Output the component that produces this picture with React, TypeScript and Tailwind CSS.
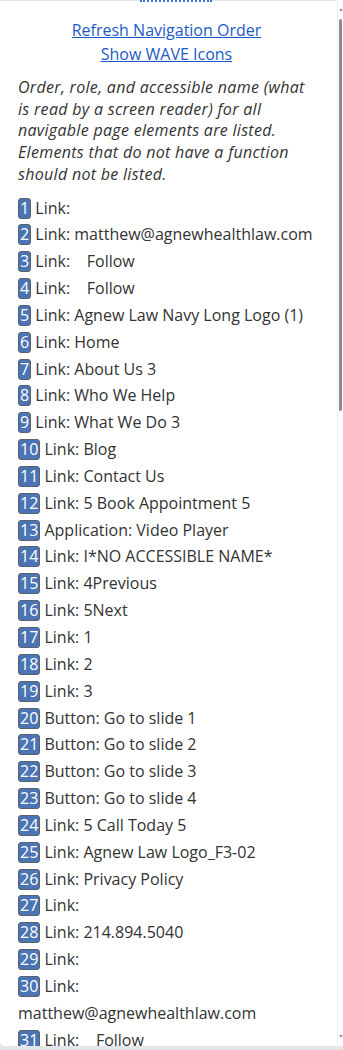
import React from "react";

/* nav order list */
const items: { role: string; name: string }[] = [
  { role: "Link", name: "" },
  { role: "Link", name: "matthew@agnewhealthlaw.com" },
  { role: "Link", name: "   Follow" },
  { role: "Link", name: "   Follow" },
  { role: "Link", name: "Agnew Law Navy Long Logo (1)" },
  { role: "Link", name: "Home" },
  { role: "Link", name: "About Us 3" },
  { role: "Link", name: "Who We Help" },
  { role: "Link", name: "What We Do 3" },
  { role: "Link", name: "Blog" },
  { role: "Link", name: "Contact Us" },
  { role: "Link", name: "5 Book Appointment 5" },
  { role: "Application", name: "Video Player" },
  { role: "Link", name: "I*NO ACCESSIBLE NAME*" },
  { role: "Link", name: "4Previous" },
  { role: "Link", name: "5Next" },
  { role: "Link", name: "1" },
  { role: "Link", name: "2" },
  { role: "Link", name: "3" },
  { role: "Button", name: "Go to slide 1" },
  { role: "Button", name: "Go to slide 2" },
  { role: "Button", name: "Go to slide 3" },
  { role: "Button", name: "Go to slide 4" },
  { role: "Link", name: "5 Call Today 5" },
  { role: "Link", name: "Agnew Law Logo_F3-02" },
  { role: "Link", name: "Privacy Policy" },
  { role: "Link", name: "" },
  { role: "Link", name: "214.894.5040" },
  { role: "Link", name: "" },
  { role: "Link", name: "matthew@agnewhealthlaw.com" },
  { role: "Link", name: "   Follow" },
  { role: "Link", name: "   Follow" },
];

export default function App() {
  return (
    <div
      className="w-[343px] h-[1050px] overflow-hidden bg-[#e4e6ea] flex flex-col"
      style={{ fontFamily: '"Open Sans", "Noto Sans", sans-serif' }}
    >
      <div className="flex flex-1 min-h-0 bg-white rounded-bl-[5px] overflow-hidden">
        {/* panel */}
        <div className="flex-1 min-w-0 flex flex-col border-r border-[#eef0f2]">
          <div className="flex h-[2px] shrink-0">
            <div className="w-[140px] border-t border-[#e3e6ea]" />
            <div className="w-[72px] border-t-2 border-dotted border-[#3c74c8]" />
            <div className="flex-1 border-t border-[#e3e6ea]" />
          </div>

          <div className="pl-[18px] pr-[22px] pt-[16px] text-[#333]">
            <div className="flex flex-col items-center text-[16px] leading-[24px]">
              <a href="#" className="text-[#1a5ac8] underline">
                Refresh Navigation Order
              </a>
              <a href="#" className="text-[#1a5ac8] underline">
                Show WAVE Icons
              </a>
            </div>

            <p className="mt-[11px] italic text-[16px] leading-[21.7px] tracking-[0.3px] text-[#333]">
              Order, role, and accessible name (what is read by a screen reader) for all navigable page elements are
              listed. Elements that do not have a function should not be listed.
            </p>

            <ol className="mt-[9px] text-[16px] leading-[26.85px]">
              {items.map((it, i) => (
                <li key={i}>
                  <span className="inline-block bg-[#4a74b4] text-white border border-[#5a6270] rounded-[3px] px-px leading-[19px] text-center">
                    {i + 1}
                  </span>{" "}
                  <span className="whitespace-pre-wrap">
                    {it.role}:{it.name ? " " + it.name : ""}
                  </span>
                </li>
              ))}
            </ol>
          </div>
        </div>

        {/* scrollbar */}
        <div className="w-[5px] shrink-0 flex flex-col items-center pt-[8px] pb-[8px]">
          <div className="w-0 h-0 border-l-[2px] border-r-[2px] border-b-[3px] border-l-transparent border-r-transparent border-b-[#9a9a9a]" />
          <div className="mt-[8px] w-[3px] h-[392px] bg-[#8c8c8c] rounded-sm" />
          <div className="flex-1" />
          <div className="w-0 h-0 border-l-[2px] border-r-[2px] border-t-[3px] border-l-transparent border-r-transparent border-t-[#9a9a9a]" />
        </div>
      </div>
      <div className="h-[4px] shrink-0" />
    </div>
  );
}
